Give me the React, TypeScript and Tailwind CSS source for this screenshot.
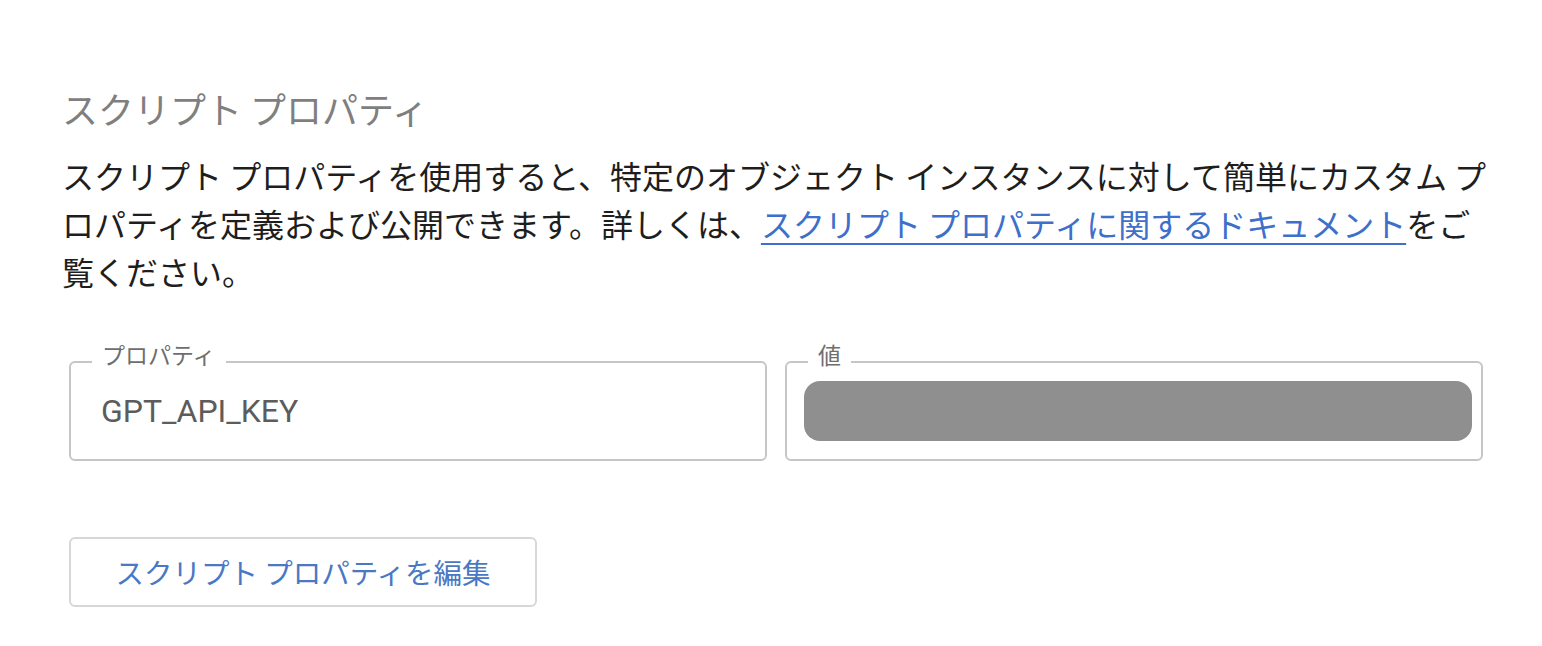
import React from 'react';

const jp = "font-['Noto_Sans_CJK_JP',sans-serif]";

function OutlinedField({ label, children }: { label: string; children: React.ReactNode }) {
  return (
    <div className="relative h-[100px] rounded-[6px] border-2 border-[#c6c6c6] flex items-center">
      <span className={`absolute left-[21px] top-[-22px] bg-white px-[10px] text-[23px] leading-[26px] text-[#6e6e6e] ${jp}`}>
        {label}
      </span>
      {children}
    </div>
  );
}

export default function App() {
  return (
    <div className={`w-[1542px] h-[646px] bg-white pl-[62px] pt-[84px] ${jp}`}>
      {/* Header */}
      <h2 className="text-[36px] leading-[48px] text-[#7f7f7f] font-normal">スクリプト プロパティ</h2>

      <p className="mt-[19px] w-[1438px] text-[32px] leading-[48px] text-[#1e1e1e]">
        スクリプト プロパティを使用すると、特定のオブジェクト インスタンスに対して簡単にカスタム プロパティを定義および公開できます。詳しくは、
        <a href="#" className="text-[#3d6fcb] underline decoration-2 underline-offset-[6px]">
          スクリプト プロパティに関するドキュメント
        </a>
        をご覧ください。
      </p>

      {/* Fields */}
      <div className="mt-[66px] ml-[7px] grid grid-cols-2 gap-[18px] w-[1414px]">
        <OutlinedField label="プロパティ">
          <span className="pl-[30px] text-[32px] text-[#5c5c5c] font-['Roboto',sans-serif]">GPT_API_KEY</span>
        </OutlinedField>
        <OutlinedField label="値">
          <div className="ml-[17px] mr-[9px] h-[60px] flex-1 rounded-[16px] bg-[#8f8f8f]" />
        </OutlinedField>
      </div>

      <button className="mt-[76px] ml-[7px] w-[468px] h-[70px] rounded-[6px] border-2 border-[#d7d7d7] bg-white text-[28.5px] text-[#4a78c4]">
        スクリプト プロパティを編集
      </button>
    </div>
  );
}
